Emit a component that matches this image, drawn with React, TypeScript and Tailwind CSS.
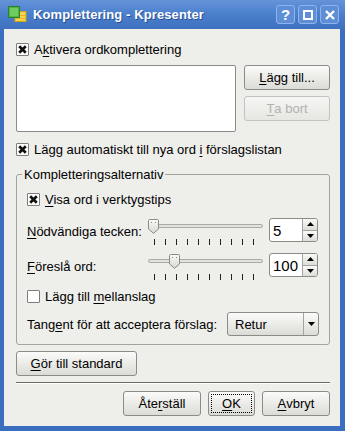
import React from 'react';

const font = { fontFamily: '"Liberation Sans", Arial, sans-serif' };

const U: React.FC<{ children: React.ReactNode }> = ({ children }) => (
  <span className="underline decoration-1 underline-offset-[2px]">{children}</span>
);

const CheckBox: React.FC<{ checked?: boolean }> = ({ checked }) => (
  <span className="w-[13px] h-[13px] shrink-0 border border-[#7d7d7a] bg-white rounded-[1px] flex items-center justify-center">
    {checked && (
      <svg width="9" height="9" viewBox="0 0 9 9">
        <path d="M1.2 1.2L7.8 7.8M7.8 1.2L1.2 7.8" stroke="#111" strokeWidth="2.7" />
      </svg>
    )}
  </span>
);

const Btn: React.FC<{ className?: string; disabled?: boolean; children: React.ReactNode }> = ({
  className = '',
  disabled,
  children,
}) => (
  <button
    className={`h-[25px] rounded-[3px] border flex items-center justify-center text-[13px] ${
      disabled
        ? 'border-[#c2c2be] bg-linear-to-b from-[#f6f6f4] to-[#e6e6e3] text-[#b2b2ae]'
        : 'border-[#8b8b88] bg-linear-to-b from-[#fbfbf9] to-[#dbdbd7] text-black'
    } ${className}`}
  >
    {children}
  </button>
);

const Handle: React.FC = () => (
  <svg width="11" height="15" viewBox="0 0 11 15" className="shrink-0">
    <defs>
      <linearGradient id="hg" x1="0" y1="0" x2="0" y2="1">
        <stop offset="0" stopColor="#fafaf8" />
        <stop offset="1" stopColor="#d6d6d2" />
      </linearGradient>
    </defs>
    <path d="M1.5 0.5H9.5Q10.5 0.5 10.5 1.5V10L5.5 14.3L0.5 10V1.5Q0.5 0.5 1.5 0.5Z" fill="url(#hg)" stroke="#8a8a87" />
    <rect x="3" y="3" width="1" height="1" fill="#8a8a87" />
    <rect x="7" y="3" width="1" height="1" fill="#8a8a87" />
  </svg>
);

const Slider: React.FC<{ offset: number }> = ({ offset }) => (
  <div className="w-[115px] flex flex-col">
    <div className="relative h-[15px] mt-[1px]">
      <div className="absolute left-0 right-0 top-[5px] h-[4px] rounded-[2px] border border-[#a9a9a5] bg-[#e2e2df]" />
      <div className="absolute top-0" style={{ left: offset }}>
        <Handle />
      </div>
    </div>
    <div className="flex gap-[10px] pl-[6px] mt-[5px]">
      {Array.from({ length: 10 }).map((_, i) => (
        <span key={i} className="w-[1px] h-[6px] bg-[#222]" />
      ))}
    </div>
  </div>
);

const Arrow: React.FC<{ up?: boolean }> = ({ up }) => (
  <svg width="7" height="4" viewBox="0 0 7 4">
    <path d={up ? 'M0 4L3.5 0L7 4Z' : 'M0 0L7 0L3.5 4Z'} fill="#000" />
  </svg>
);

const SpinBox: React.FC<{ value: string }> = ({ value }) => (
  <div className="w-[49px] h-[24px] border border-[#8b8b88] rounded-[3px] bg-white flex overflow-hidden">
    <span className="flex-1 pl-[3px] flex items-center text-[15px] leading-none">{value}</span>
    <div className="w-[15px] flex flex-col border-l border-[#a3a3a0]">
      <span className="flex-1 flex items-center justify-center bg-linear-to-b from-[#fafaf8] to-[#dcdcd8] border-b border-[#a3a3a0]">
        <Arrow up />
      </span>
      <span className="flex-1 flex items-center justify-center bg-linear-to-b from-[#fafaf8] to-[#dcdcd8]">
        <Arrow />
      </span>
    </div>
  </div>
);

const TitleBar: React.FC = () => (
  <div className="h-[29px] flex items-center pl-[8px] pr-[6px] bg-linear-to-b from-[#6593d8] via-[#4a7fcc] to-[#3e71bf]">
    <svg width="19" height="17" viewBox="0 0 19 17" className="shrink-0">
      <rect x="7" y="5.5" width="11" height="10" fill="#f7d54a" stroke="#c9a21e" />
      <rect x="8" y="9" width="9" height="1" fill="#e0b630" />
      <rect x="8" y="12" width="9" height="1" fill="#e0b630" />
      <rect x="0.5" y="0.5" width="11" height="11" fill="#4fb548" stroke="#2e7f2a" />
      <rect x="2" y="2" width="8" height="8" fill="#6dcc5f" />
    </svg>
    <span
      className="ml-[6px] text-white text-[13px] font-bold tracking-[0.1px]"
      style={{ textShadow: '1px 1px 0 rgba(20,50,110,0.6)' }}
    >
      Komplettering - Kpresenter
    </span>
    <div className="ml-auto flex gap-[3px]">
      <span className="w-[19px] h-[19px] rounded-[3px] border border-[#8fb3ec] bg-[#5e8fd6] flex items-center justify-center text-white font-bold text-[15px] leading-none">
        ?
      </span>
      <span className="w-[19px] h-[19px] rounded-[3px] border border-[#8fb3ec] bg-[#5e8fd6] flex items-center justify-center">
        <span className="w-[10px] h-[10px] border-2 border-white" />
      </span>
      <span className="w-[19px] h-[19px] rounded-[3px] border border-[#8fb3ec] bg-[#5e8fd6] flex items-center justify-center">
        <svg width="10" height="10" viewBox="0 0 10 10">
          <path d="M1 1L9 9M9 1L1 9" stroke="#fff" strokeWidth="2.4" />
        </svg>
      </span>
    </div>
  </div>
);

export default function App() {
  return (
    <div
      className="w-[345px] h-[431px] flex flex-col bg-[#3b6ebf] text-[13px] text-black leading-[15px]"
      style={font}
    >
      <TitleBar />
      <div className="flex-1 ml-[4px] mr-[5px] mb-[5px] bg-[#eeeeeb] flex flex-col pl-[12px] pr-[10px]">
        <div className="mt-[11px] h-[18px] flex items-center gap-[5px]">
          <CheckBox checked />
          <span>
            A<U>k</U>tivera ordkomplettering
          </span>
        </div>

        <div className="mt-[7px] h-[67px] flex gap-[8px]">
          <div className="w-[220px] border border-[#8b8b88] rounded-[2px] bg-white" />
          <div className="flex-1 flex flex-col gap-[6px]">
            <Btn>
              <U>L</U>ägg till...
            </Btn>
            <Btn disabled>
              <U>T</U>a bort
            </Btn>
          </div>
        </div>

        <div className="mt-[8px] h-[18px] flex items-center gap-[5px]">
          <CheckBox checked />
          <span>
            Lägg automatiskt till nya ord <U>i</U> förslagslistan
          </span>
        </div>

        <fieldset className="mt-[9px] border border-[#a3a3a0] rounded-[3px] pl-[10px] pr-[10px] pt-[8px] pb-[8px] flex flex-col">
          <legend className="-ml-[5px] px-[2px] leading-[15px]">Kompletteringsalternativ</legend>
          <div className="h-[18px] flex items-center gap-[5px]">
            <CheckBox checked />
            <span>
              <U>V</U>isa ord i verktygstips
            </span>
          </div>

          <div className="mt-[10px] h-[27px] flex items-start">
            <span className="mt-[6px] w-[121px]">
              <U>N</U>ödvändiga tecken:
            </span>
            <Slider offset={0} />
            <div className="ml-[6px]">
              <SpinBox value="5" />
            </div>
          </div>

          <div className="mt-[8px] h-[27px] flex items-start">
            <span className="mt-[6px] w-[121px]">
              <U>F</U>öreslå ord:
            </span>
            <Slider offset={21} />
            <div className="ml-[6px]">
              <SpinBox value="100" />
            </div>
          </div>

          <div className="mt-[7px] h-[18px] flex items-center gap-[5px]">
            <CheckBox />
            <span>
              Lägg till <U>m</U>ellanslag
            </span>
          </div>

          <div className="mt-[7px] h-[24px] flex items-center">
            <span className="flex-1">
              Tang<U>e</U>nt för att acceptera förslag:
            </span>
            <div className="w-[92px] h-[24px] border border-[#8b8b88] rounded-[3px] bg-linear-to-b from-[#fbfbf9] to-[#dbdbd7] flex">
              <span className="flex-1 pl-[7px] flex items-center">Retur</span>
              <span className="w-[15px] border-l border-[#a3a3a0] flex items-center justify-center">
                <Arrow />
              </span>
            </div>
          </div>
        </fieldset>

        <div className="mt-[6px] flex">
          <Btn className="w-[121px]">
            <U>G</U>ör till standard
          </Btn>
        </div>

        <div className="mt-[6px] border-t border-[#6c6c69] border-b border-b-white" />

        <div className="mt-[7px] flex justify-end gap-[7px]">
          <Btn className="w-[78px]">
            Åte<U>r</U>ställ
          </Btn>
          <button className="w-[47px] h-[25px] rounded-[3px] border border-[#8b8b88] bg-linear-to-b from-[#fbfbf9] to-[#dbdbd7] p-[2px] flex">
            <span className="flex-1 border border-dotted border-black flex items-center justify-center text-[13px]">
              <U>O</U>K
            </span>
          </button>
          <Btn className="w-[68px]">
            <U>A</U>vbryt
          </Btn>
        </div>
      </div>
    </div>
  );
}
